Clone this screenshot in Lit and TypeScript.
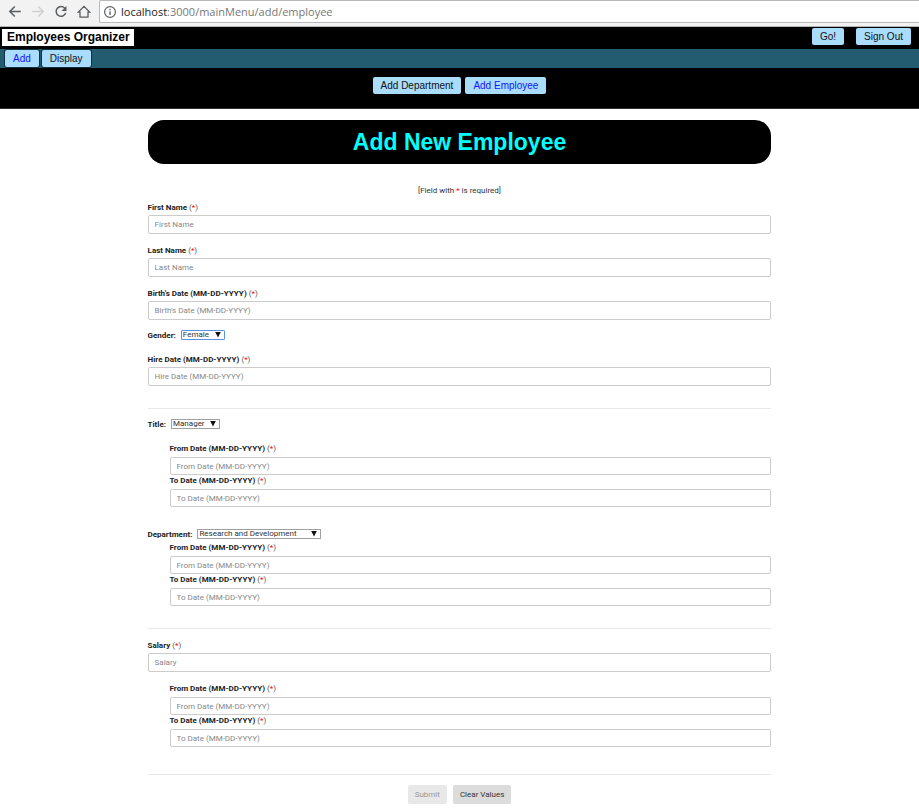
import { LitElement, html, css, svg } from "lit";
import { customElement, property } from "lit/decorators.js";

const controls = css`
  * {
    box-sizing: border-box;
  }
  button,
  input,
  select {
    font-family: inherit;
    margin: 0;
  }
`;

const stroke = (d: unknown, cls = "") => html`
  <svg class="icon ${cls}" viewBox="0 0 14 14" width="14" height="14" aria-hidden="true">${d}</svg>
`;

@customElement("browser-bar")
export class BrowserBar extends LitElement {
  static styles = [
    controls,
    css`
      :host {
        display: flex;
        align-items: flex-start;
        height: 27px;
        background: #f2f2f2;
        border-bottom: 1px solid #b4b4b4;
        font-family: "Open Sans", "Noto Sans", sans-serif;
      }
      .tools {
        display: flex;
        gap: 9px;
        padding: 5px 8px 0 8px;
      }
      .tool {
        display: flex;
        width: 14px;
        height: 14px;
        padding: 0;
        border: 0;
        background: none;
      }
      .icon {
        fill: none;
        stroke: #5a5e62;
        stroke-width: 1.5;
      }
      .off {
        stroke: #cfcfcf;
      }
      .address {
        display: flex;
        flex: 1;
        align-items: center;
        gap: 4px;
        height: 23px;
        padding-left: 3px;
        background: #fff;
        border: 1px solid #b8b8b8;
        border-right: 0;
        border-radius: 2px 0 0 2px;
        color: #777;
        font-size: 11px;
      }
      .host {
        color: #222;
      }
    `,
  ];

  render() {
    return html`
      <div class="tools">
        <button class="tool" aria-label="Back">
          ${stroke(svg`<path d="M12.8 6.5H2M6.8 1.5 1.8 6.5l5 5"/>`)}
        </button>
        <button class="tool" aria-label="Forward" disabled>
          ${stroke(svg`<path d="M1.2 6.5H12M7.2 1.5l5 5-5 5"/>`, "off")}
        </button>
        <button class="tool" aria-label="Reload">
          ${stroke(svg`<path d="M10.8 3.2A4.9 4.9 0 1 0 11.7 8"/><path d="M12.5 1v5H7.5z" fill="#5a5e62" stroke="none"/>`)}
        </button>
        <button class="tool" aria-label="Home">
          ${stroke(svg`<path d="M1.2 7.2 7 1.4l5.8 5.8H11v5H3v-5z" stroke-width="1.3"/>`)}
        </button>
      </div>
      <div class="address">
        ${stroke(svg`<circle cx="7" cy="7" r="5.4" stroke-width="1.2"/><path d="M7 6.2V10M7 3.8v1.4" stroke-width="1.3"/>`)}
        <div><span class="host">localhost</span>:3000/mainMenu/add/employee</div>
      </div>
    `;
  }
}

@customElement("main-menu")
export class MainMenu extends LitElement {
  static styles = [
    controls,
    css`
      :host {
        display: block;
        background: #000;
      }
      .top,
      .menu,
      .submenu {
        display: flex;
      }
      .top {
        align-items: flex-start;
        height: 22px;
        padding: 1px 8px 0 2px;
      }
      .brand {
        margin: 1px auto 0 0;
        padding: 0 4px 0 5px;
        background: #fff;
        color: #000;
        font-size: 12px;
        font-weight: bold;
        line-height: 17px;
      }
      .session {
        display: flex;
        gap: 12px;
      }
      .pill {
        height: 17px;
        padding: 0 8px;
        border: 0;
        border-radius: 2px;
        background: #aadcfb;
        color: #111;
        font-size: 10px;
        line-height: 17px;
      }
      .current {
        color: #1414ff;
      }
      .menu {
        align-items: center;
        gap: 3px;
        height: 19px;
        padding-left: 5px;
        background: #235b70;
      }
      .menu .pill {
        box-shadow: 0 0 0 1px #12323f;
      }
      .submenu {
        justify-content: center;
        gap: 4px;
        height: 41px;
        padding-top: 9px;
        border-bottom: 1px solid #333;
      }
    `,
  ];

  render() {
    return html`
      <header class="top">
        <div class="brand">Employees Organizer</div>
        <div class="session">
          <button class="pill">Go!</button>
          <button class="pill">Sign Out</button>
        </div>
      </header>
      <nav class="menu">
        <button class="pill current">Add</button>
        <button class="pill">Display</button>
      </nav>
      <nav class="submenu">
        <button class="pill">Add Department</button>
        <button class="pill current">Add Employee</button>
      </nav>
    `;
  }
}

@customElement("text-field")
export class TextField extends LitElement {
  @property() label = "";

  static styles = [
    controls,
    css`
      :host {
        display: block;
      }
      .label {
        display: block;
        height: 15px;
        color: #555;
        font-size: 8px;
        line-height: 15px;
      }
      .name {
        color: #222;
        font-weight: bold;
      }
      .star {
        color: #f00;
      }
      .input {
        display: block;
        width: 100%;
        height: 19px;
        padding: 0 6px;
        border: 1px solid #ccc;
        border-radius: 2px;
        background: #fff;
        color: #333;
        font-size: 8px;
        outline-color: #6a9bea;
      }
      .input::placeholder {
        color: #888;
        opacity: 1;
      }
      :host([compact]) .label {
        height: 14px;
        line-height: 12px;
      }
      :host([compact]) .input {
        height: 18px;
      }
    `,
  ];

  render() {
    return html`
      <label class="label" for="value"
        ><span class="name">${this.label}</span> (<span class="star">*</span>)</label
      >
      <input class="input" id="value" type="text" placeholder=${this.label} required />
    `;
  }
}

@customElement("choice-field")
export class ChoiceField extends LitElement {
  @property() label = "";
  @property({ type: Array }) options: string[] = [];

  static styles = [
    controls,
    css`
      :host {
        display: flex;
        align-items: center;
        gap: 5px;
        height: 12px;
        font-size: 8px;
      }
      .name {
        color: #222;
        font-weight: bold;
      }
      .box {
        display: flex;
        position: relative;
      }
      .select {
        appearance: none;
        height: 10px;
        padding: 0 14px 0 1px;
        border: 1px solid #a0a0a0;
        border-radius: 0;
        background: #fff;
        color: #333;
        font-size: 8px;
        line-height: 8px;
      }
      :host([active]) .select {
        border-color: #5b8fe8;
        border-radius: 1px;
      }
      :host([wide]) .select {
        padding-right: 23px;
      }
      .arrow {
        position: absolute;
        top: 2px;
        right: 4px;
        fill: #111;
        pointer-events: none;
      }
    `,
  ];

  render() {
    return html`
      <label class="name" for="value">${this.label}:</label>
      <div class="box">
        <select class="select" id="value">
          ${this.options.map((o) => html`<option>${o}</option>`)}
        </select>
        <svg class="arrow" viewBox="0 0 6 6" width="6" height="6" aria-hidden="true">
          <path d="M.2 0h5.6L3 5.6z" />
        </svg>
      </div>
    `;
  }
}

@customElement("date-range")
export class DateRange extends LitElement {
  static styles = css`
    :host {
      display: block;
      padding-left: 22px;
    }
  `;

  render() {
    return html`
      <text-field compact label="From Date (MM-DD-YYYY)"></text-field>
      <text-field compact label="To Date (MM-DD-YYYY)"></text-field>
    `;
  }
}

@customElement("app-root")
export class AppRoot extends LitElement {
  static styles = [
    controls,
    css`
      :host {
        display: block;
        background: #fff;
        color: #333;
        font-family: "Liberation Sans", Arial, sans-serif;
      }
      .page {
        width: calc(68% - 1px);
        margin: 0 auto;
        padding: 11px 0 6px;
      }
      .title {
        margin: 0 0 20px;
        border-radius: 16px;
        background: #000;
        color: #0ff;
        font-size: 23px;
        line-height: 44px;
        text-align: center;
      }
      .hint {
        margin: 0 0 2px;
        font-size: 8px;
        line-height: 14px;
        text-align: center;
      }
      .hint,
      form {
        font-family: Roboto, "Liberation Sans", sans-serif;
      }
      .star {
        color: #f00;
      }
      .group {
        display: flex;
        flex-direction: column;
      }
      .personal {
        gap: 9px;
      }
      .gender {
        margin-bottom: 2px;
      }
      .history {
        gap: 13px;
      }
      .department {
        gap: 2px;
        margin-top: 21px;
      }
      .pay {
        gap: 11px;
      }
      .rule {
        height: 1px;
        margin: 22px 0 9px;
        border: 0;
        background: #e8e8e8;
      }
      .end {
        margin: 27px 0 10px;
      }
      .actions {
        display: flex;
        justify-content: center;
        gap: 6px;
      }
      .action {
        height: 19px;
        padding: 0 7px;
        border: 0;
        border-radius: 2px;
        background: #dcdcdc;
        color: #333;
        font-size: 8px;
      }
      .action:disabled {
        background: #e8e8e8;
        color: #999;
      }
    `,
  ];

  render() {
    return html`
      <browser-bar></browser-bar>
      <main-menu></main-menu>
      <main class="page">
        <h1 class="title">Add New Employee</h1>
        <p class="hint">[Field with <span class="star">*</span> is required]</p>
        <form>
          <div class="group personal">
            <text-field label="First Name"></text-field>
            <text-field label="Last Name"></text-field>
            <text-field label="Birth's Date (MM-DD-YYYY)"></text-field>
            <choice-field class="gender" active label="Gender" .options=${["Female", "Male"]}></choice-field>
            <text-field label="Hire Date (MM-DD-YYYY)"></text-field>
          </div>
          <hr class="rule" />
          <div class="group history">
            <choice-field label="Title" .options=${["Manager", "Engineer"]}></choice-field>
            <date-range></date-range>
          </div>
          <div class="group department">
            <choice-field wide label="Department" .options=${["Research and Development", "Sales"]}></choice-field>
            <date-range></date-range>
          </div>
          <hr class="rule" />
          <div class="group pay">
            <text-field label="Salary"></text-field>
            <date-range></date-range>
          </div>
          <hr class="rule end" />
          <div class="actions">
            <button class="action" type="submit" disabled>Submit</button>
            <button class="action" type="reset">Clear Values</button>
          </div>
        </form>
      </main>
    `;
  }
}
